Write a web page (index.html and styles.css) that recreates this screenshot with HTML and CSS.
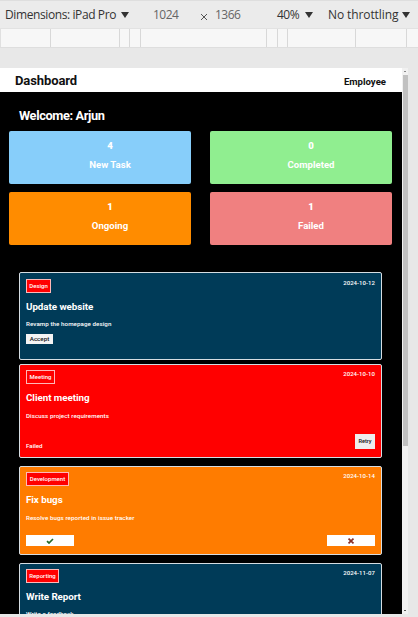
FILE: index.html
```html
<!DOCTYPE html>
<html lang="en">
<head>
<meta charset="utf-8">
<title>Dashboard</title>
<link rel="stylesheet" href="styles.css">
</head>
<body>
<div class="toolbar">
  <span class="device">Dimensions: iPad Pro</span><i class="caret"></i>
  <span class="size width">1024</span>
  <svg class="times" viewBox="0 0 8 8"><path d="M1 1l6 6M7 1L1 7"/></svg>
  <span class="size height">1366</span>
  <span class="zoom">40%</span><i class="caret"></i>
  <span class="throttle">No throttling</span><i class="caret"></i>
</div>
<div class="ruler"><i></i><i></i><i></i><i></i><i></i><i></i><i></i><i></i><i></i><i></i></div>
<div class="viewport">
  <div class="page">
    <header class="header"><h1>Dashboard</h1><span>Employee</span></header>
    <h2 class="welcome">Welcome: Arjun</h2>
    <section class="stats">
      <div class="stat new"><b>4</b><span>New Task</span></div>
      <div class="stat completed"><b>0</b><span>Completed</span></div>
      <div class="stat ongoing"><b>1</b><span>Ongoing</span></div>
      <div class="stat failed"><b>1</b><span>Failed</span></div>
    </section>
    <section class="tasks">
      <article class="task open">
        <div class="top"><span class="tag design">Design</span><time>2024-10-12</time></div>
        <h3>Update website</h3>
        <p>Revamp the homepage design</p>
        <button class="accept">Accept</button>
      </article>
      <article class="task missed">
        <div class="top"><span class="tag meeting">Meeting</span><time>2024-10-10</time></div>
        <h3>Client meeting</h3>
        <p>Discuss project requirements</p>
        <div class="actions"><span class="status">Failed</span><button class="retry">Retry</button></div>
      </article>
      <article class="task active">
        <div class="top"><span class="tag development">Development</span><time>2024-10-14</time></div>
        <h3>Fix bugs</h3>
        <p>Resolve bugs reported in issue tracker</p>
        <div class="actions">
          <button class="mark"><svg viewBox="0 0 8 6"><path class="check" d="M1 3.2L3 5L7 1"/></svg></button>
          <button class="mark"><svg viewBox="0 0 8 6"><path class="cross" d="M1.5 .6L6.5 5.4M6.5 .6L1.5 5.4"/></svg></button>
        </div>
      </article>
      <article class="task open last">
        <div class="top"><span class="tag reporting">Reporting</span><time>2024-11-07</time></div>
        <h3>Write Report</h3>
        <p>Write a feedback</p>
      </article>
    </section>
  </div>
  <div class="scrollbar"><i class="up"></i><i class="thumb"></i><i class="down"></i></div>
</div>
</body>
</html>
```
FILE: styles.css
```css
* { box-sizing: border-box; }
body { margin: 0; width: 418px; height: 617px; overflow: hidden; background: #e8e8e8; font-family: Roboto, sans-serif; }
h1, h2, h3, p { margin: 0; }
button { border: 0; padding: 0; font-family: inherit; }

.toolbar { height: 28px; padding: 1px 0 0 5px; display: flex; align-items: center; background: #ebebeb; border-top: 1px solid #dedede; color: #333; font: 12px/26px "Open Sans", sans-serif; white-space: nowrap; }
.device { width: 111px; letter-spacing: -.4px; }
.caret { width: 8px; height: 6px; margin-left: 5px; background: #333; clip-path: polygon(0 0, 100% 0, 50% 100%); }
.size { width: 26px; color: #666; letter-spacing: -.5px; }
.width { margin-left: 24px; }
.times { width: 8px; height: 8px; margin: 3px 7px 0 21px; fill: none; stroke: #555; stroke-width: 1; }
.zoom { width: 23px; margin-left: 36px; letter-spacing: -.5px; }
.throttle { width: 69px; margin-left: 15px; letter-spacing: -.1px; }

.ruler { height: 20px; display: grid; grid-template-columns: 51px 69px 10px 11px 126px 11px 10px 68px 51px 11px; background: #f7f7f7; border-top: 1px solid #e2e2e2; border-bottom: 1px solid #dedede; }
.ruler i { border-right: 1px solid #d8d8d8; height: 18px; }
.ruler i:nth-child(1) { border-left: 1px solid #e0e0e0; }
.ruler i:last-child { border: 0; }

.viewport { display: flex; height: 546px; margin-top: 20px; width: 408px; }
.page { width: 402px; height: 546px; overflow: hidden; background: #000; }
.header { height: 24px; padding: 0 16px 0 15px; display: flex; justify-content: space-between; background: #fff; color: #111; font-weight: 700; }
.header h1 { font-size: 13px; line-height: 25px; letter-spacing: -.1px; }
.header span { font-size: 9.6px; line-height: 28px; }
.welcome { margin: 16px 0 0 19px; height: 15px; color: #fff; font-size: 12.8px; line-height: 15px; letter-spacing: -.38px; }

.stats { display: grid; grid-template-columns: 182px 182px; grid-template-rows: 53px 53px; gap: 8px 19px; margin: 8px 0 0 9px; }
.stat { border-radius: 2px; padding: 8px 0 0 20px; color: #fff; text-align: center; font-size: 9.6px; font-weight: 700; }
.stat b, .stat span { display: block; line-height: 14px; }
.stat span { margin-top: 5px; }
.new { background: #87cefa; }
.completed { background: #90ee90; }
.ongoing { background: #ff8c00; }
.failed { background: #f08080; }

.tasks { width: 363px; margin: 27px 0 0 19px; }
.task { border: 1px solid #d5dde2; border-radius: 2px; padding: 6px; color: #fff; overflow: hidden; }
.open { height: 88px; margin-bottom: 4px; background: #003b58; }
.missed { height: 94px; margin-bottom: 8px; padding-top: 5px; background: #f00; }
.active { height: 89px; margin-bottom: 8px; padding-top: 5px; background: #ff7c00; }
.last { padding-top: 5px; }
.top { height: 14px; display: flex; justify-content: space-between; }
.tag { height: 14px; border: 1px solid #ffb8b8; background: #f00; font-size: 6px; font-weight: 500; line-height: 12px; text-align: center; }
.design { width: 25px; }
.meeting { width: 29px; }
.development { width: 43px; }
.reporting { width: 33px; }
.top time { font-size: 6px; font-weight: 500; line-height: 8px; letter-spacing: .04px; }
.task h3 { margin-top: 7px; font-size: 9.8px; line-height: 14px; letter-spacing: -.05px; }
.task p { margin-top: 6px; font-size: 6.2px; font-weight: 500; line-height: 8px; letter-spacing: .07px; }
.missed p, .active p { margin-top: 7px; }
.accept { display: block; width: 27px; height: 10px; margin-top: 6px; background: #f4f4f4; color: #111; font-size: 6.2px; font-weight: 500; line-height: 10px; }
.actions { display: flex; justify-content: space-between; margin-top: 13px; }
.missed .actions { margin-top: 14px; }
.status { padding-top: 8px; font-size: 6.2px; font-weight: 500; line-height: 8px; }
.retry { width: 20px; height: 15px; background: #eee; color: #111; font-size: 5.6px; font-weight: 500; line-height: 15px; }
.mark { display: flex; width: 48px; height: 11px; align-items: center; justify-content: center; background: #fff; }
.mark svg { width: 8px; height: 6px; fill: none; stroke-width: 1.7; }
.check { stroke: #236b2a; }
.cross { stroke: #8b3028; }

.scrollbar { width: 6px; display: flex; flex-direction: column; align-items: center; background: #f1f1f1; }
.up { width: 2px; height: 1px; margin: 3px 0; background: #888; }
.thumb { width: 5px; height: 371px; background: #c1c1c1; }
.down { width: 2px; height: 1px; margin: auto 0 3px; background: #555; }
```
